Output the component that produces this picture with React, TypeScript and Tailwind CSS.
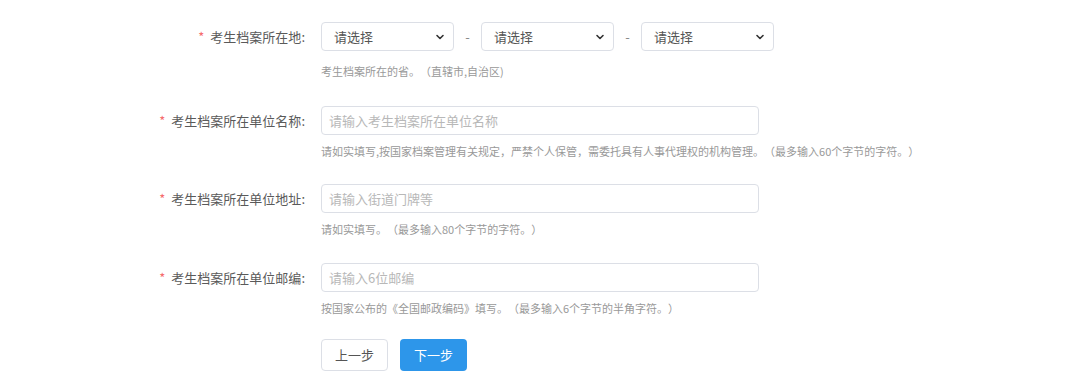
import React from "react";

const Chevron = () => (
  <svg width="10" height="10" viewBox="0 0 10 10" fill="none">
    <path d="M2 3.5 L5 6.5 L8 3.5" stroke="#333" strokeWidth="1.6" strokeLinecap="round" strokeLinejoin="round" />
  </svg>
);

const Select = () => (
  <div className="w-[133px] h-[29px] border border-[#dcdfe6] rounded-[4px] bg-white flex items-center justify-between pl-[12px] pr-[8px] text-[13px] text-[#555]">
    <span>请选择</span>
    <Chevron />
  </div>
);

const Label = ({ text }: { text: string }) => (
  <div className="w-[305px] shrink-0 flex justify-end items-center h-[29px] text-[13px] text-[#5a5a5a]">
    <span className="text-[#f56c6c] mr-[6px] text-[13px]">*</span>
    <span>{text}:</span>
  </div>
);

const Input = ({ placeholder }: { placeholder: string }) => (
  <div className="w-[438px] h-[29px] border border-[#dcdfe6] rounded-[4px] bg-white flex items-center px-[7px] text-[13px] text-[#b8b8b8]">
    {placeholder}
  </div>
);

const Help = ({ text, mt }: { text: string; mt: string }) => (
  <div className={`${mt} h-[16px] leading-[16px] text-[11px] text-[#999] whitespace-nowrap [text-spacing-trim:space-all]`}>{text}</div>
);

export default function App() {
  return (
    <div className="w-[1080px] h-[392px] bg-white font-['Noto_Sans_CJK_SC','Noto_Sans',sans-serif] pt-[22px] overflow-hidden [text-spacing-trim:space-all]">
      <div className="flex gap-[16px] mb-[27px]">
        <Label text="考生档案所在地" />
        <div className="flex flex-col">
          <div className="flex items-center">
            <Select />
            <div className="w-[27px] text-center text-[13px] text-[#888]">-</div>
            <Select />
            <div className="w-[27px] text-center text-[13px] text-[#888]">-</div>
            <Select />
          </div>
          <Help mt="mt-[12px]" text="考生档案所在的省。（直辖市,自治区)" />
        </div>
      </div>

      <div className="flex gap-[16px] mb-[25px]">
        <Label text="考生档案所在单位名称" />
        <div className="flex flex-col">
          <Input placeholder="请输入考生档案所在单位名称" />
          <Help mt="mt-[8px]" text="请如实填写,按国家档案管理有关规定，严禁个人保管，需委托具有人事代理权的机构管理。（最多输入60个字节的字符。）" />
        </div>
      </div>

      <div className="flex gap-[16px] mb-[26px]">
        <Label text="考生档案所在单位地址" />
        <div className="flex flex-col">
          <Input placeholder="请输入街道门牌等" />
          <Help mt="mt-[8px]" text="请如实填写。（最多输入80个字节的字符。）" />
        </div>
      </div>

      <div className="flex gap-[16px] mb-[23px]">
        <Label text="考生档案所在单位邮编" />
        <div className="flex flex-col">
          <Input placeholder="请输入6位邮编" />
          <Help mt="mt-[8px]" text="按国家公布的《全国邮政编码》填写。（最多输入6个字节的半角字符。）" />
        </div>
      </div>

      <div className="flex pl-[321px] gap-[12px]">
        <button className="w-[67px] h-[32px] border border-[#dcdfe6] rounded-[4px] bg-white text-[13px] text-[#555]">上一步</button>
        <button className="w-[67px] h-[32px] rounded-[4px] bg-[#2d96ea] text-[13px] text-white">下一步</button>
      </div>
    </div>
  );
}
